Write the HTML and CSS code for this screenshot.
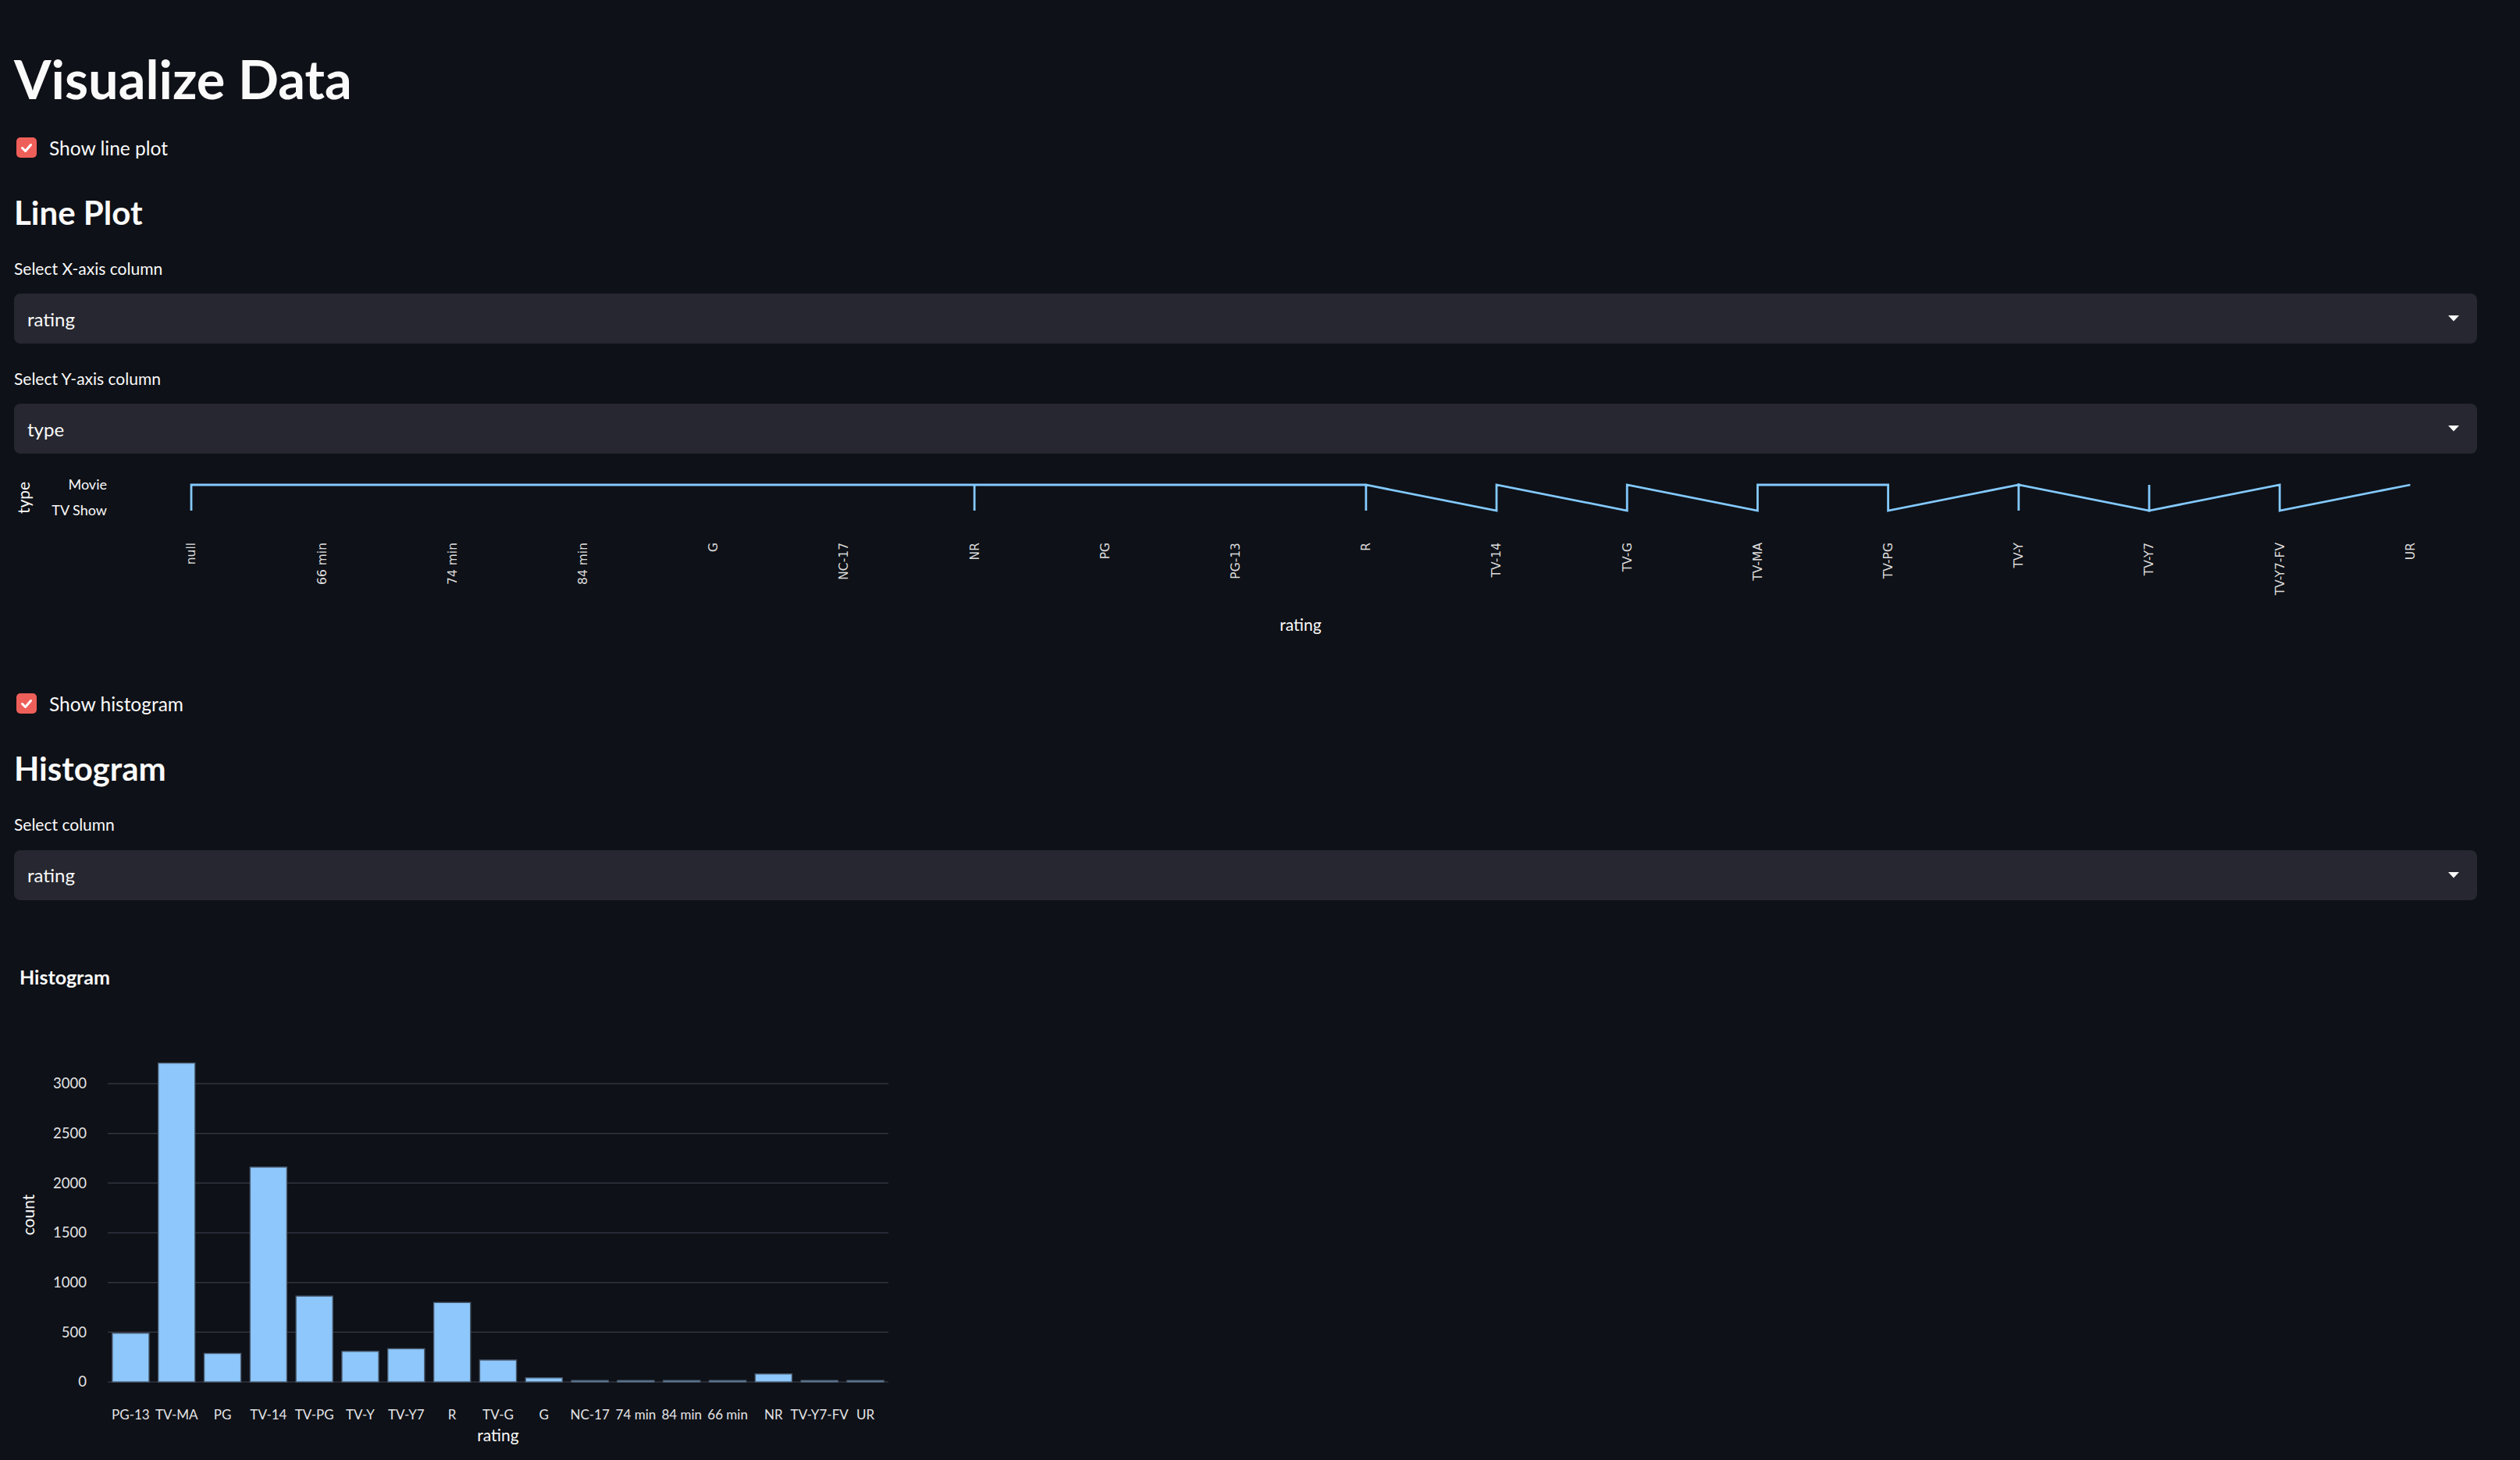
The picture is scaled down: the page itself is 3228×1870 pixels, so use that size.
FILE: index.html
```html
<!DOCTYPE html>
<html lang="en">
<head>
<meta charset="utf-8">
<title>Visualize Data</title>
<link rel="stylesheet" href="styles.css">
</head>
<body>
<main class="app">
  <h1 class="title">Visualize Data</h1>

  <label class="checkbox">
    <span class="box"><svg width="26" height="26" viewBox="0 0 26 26"><polyline points="7.5,13.5 11.5,17.5 18.5,9.5" fill="none" stroke="#ffffff" stroke-width="3" stroke-linecap="round" stroke-linejoin="round"/></svg></span>
    <span class="check-label">Show line plot</span>
  </label>

  <h3 class="subheader">Line Plot</h3>

  <div class="field">
    <div class="field-label">Select X-axis column</div>
    <div class="select"><span class="value">rating</span><svg class="arrow" width="14" height="8" viewBox="0 0 14 8"><polygon points="0,0 14,0 7,7.5" fill="#fafafa"/></svg></div>
  </div>

  <div class="field">
    <div class="field-label">Select Y-axis column</div>
    <div class="select"><span class="value">type</span><svg class="arrow" width="14" height="8" viewBox="0 0 14 8"><polygon points="0,0 14,0 7,7.5" fill="#fafafa"/></svg></div>
  </div>

  <div class="chart line-chart">
    <svg width="3155" height="230" viewBox="0 0 3155 230">
      <text class="axis-title" x="13" y="38.5" transform="rotate(-90 13 38.5)" text-anchor="middle" dy="0.35em">type</text>
      <text class="ylab" x="119" y="22" text-anchor="end" dy="0.35em">Movie</text>
      <text class="ylab" x="119" y="55" text-anchor="end" dy="0.35em">TV Show</text>
      <path d="M227,55 L227,22 L1230.2,22 L1230.2,55 L1230.2,22 L1731.8,22 L1731.8,55 L1731.8,22 L1899,55 L1899,22 L2066.2,55 L2066.2,22 L2233.4,55 L2233.4,22 L2400.6,22 L2400.6,55 L2567.8,22 L2567.8,55 L2567.8,22 L2735,55 L2735,22 L2735,55 L2902.2,22 L2902.2,55 L3069.4,22" fill="none" stroke="#83c9ff" stroke-width="2.8"/>
      <g class="xlab" text-anchor="end">
        <text x="227" y="96" transform="rotate(-90 227 96)" dy="0.35em">null</text>
        <text x="394.2" y="96" transform="rotate(-90 394.2 96)" dy="0.35em">66 min</text>
        <text x="561.4" y="96" transform="rotate(-90 561.4 96)" dy="0.35em">74 min</text>
        <text x="728.6" y="96" transform="rotate(-90 728.6 96)" dy="0.35em">84 min</text>
        <text x="895.8" y="96" transform="rotate(-90 895.8 96)" dy="0.35em">G</text>
        <text x="1063" y="96" transform="rotate(-90 1063 96)" dy="0.35em">NC-17</text>
        <text x="1230.2" y="96" transform="rotate(-90 1230.2 96)" dy="0.35em">NR</text>
        <text x="1397.4" y="96" transform="rotate(-90 1397.4 96)" dy="0.35em">PG</text>
        <text x="1564.6" y="96" transform="rotate(-90 1564.6 96)" dy="0.35em">PG-13</text>
        <text x="1731.8" y="96" transform="rotate(-90 1731.8 96)" dy="0.35em">R</text>
        <text x="1899" y="96" transform="rotate(-90 1899 96)" dy="0.35em">TV-14</text>
        <text x="2066.2" y="96" transform="rotate(-90 2066.2 96)" dy="0.35em">TV-G</text>
        <text x="2233.4" y="96" transform="rotate(-90 2233.4 96)" dy="0.35em">TV-MA</text>
        <text x="2400.6" y="96" transform="rotate(-90 2400.6 96)" dy="0.35em">TV-PG</text>
        <text x="2567.8" y="96" transform="rotate(-90 2567.8 96)" dy="0.35em">TV-Y</text>
        <text x="2735" y="96" transform="rotate(-90 2735 96)" dy="0.35em">TV-Y7</text>
        <text x="2902.2" y="96" transform="rotate(-90 2902.2 96)" dy="0.35em">TV-Y7-FV</text>
        <text x="3069.4" y="96" transform="rotate(-90 3069.4 96)" dy="0.35em">UR</text>
      </g>
      <text class="axis-title" x="1648" y="202" text-anchor="middle" dy="0.35em">rating</text>
    </svg>
  </div>

  <label class="checkbox">
    <span class="box"><svg width="26" height="26" viewBox="0 0 26 26"><polyline points="7.5,13.5 11.5,17.5 18.5,9.5" fill="none" stroke="#ffffff" stroke-width="3" stroke-linecap="round" stroke-linejoin="round"/></svg></span>
    <span class="check-label">Show histogram</span>
  </label>

  <h3 class="subheader">Histogram</h3>

  <div class="field">
    <div class="field-label">Select column</div>
    <div class="select"><span class="value">rating</span><svg class="arrow" width="14" height="8" viewBox="0 0 14 8"><polygon points="0,0 14,0 7,7.5" fill="#fafafa"/></svg></div>
  </div>

  <div class="chart hist-chart">
    <svg width="1160" height="700" viewBox="0 0 1160 700">
      <text class="hist-title" x="7" y="80" dy="0.35em">Histogram</text>
      <g class="grid">
        <line x1="120" x2="1120" y1="216" y2="216"/>
        <line x1="120" x2="1120" y1="279.7" y2="279.7"/>
        <line x1="120" x2="1120" y1="343.3" y2="343.3"/>
        <line x1="120" x2="1120" y1="407" y2="407"/>
        <line x1="120" x2="1120" y1="470.7" y2="470.7"/>
        <line x1="120" x2="1120" y1="534.3" y2="534.3"/>
        <line x1="120" x2="1120" y1="598" y2="598"/>
      </g>
      <g class="ytick" text-anchor="end">
        <text x="93" y="216" dy="0.35em">3000</text>
        <text x="93" y="279.7" dy="0.35em">2500</text>
        <text x="93" y="343.3" dy="0.35em">2000</text>
        <text x="93" y="407" dy="0.35em">1500</text>
        <text x="93" y="470.7" dy="0.35em">1000</text>
        <text x="93" y="534.3" dy="0.35em">500</text>
        <text x="93" y="598" dy="0.35em">0</text>
      </g>
      <text class="axis-title" x="19" y="384" transform="rotate(-90 19 384)" text-anchor="middle" dy="0.35em">count</text>
      <g class="bars">
        <rect x="125.88" y="535.6" width="47.06" height="62.4"/>
        <rect x="184.70" y="189.6" width="47.06" height="408.4"/>
        <rect x="243.52" y="561.5" width="47.06" height="36.5"/>
        <rect x="302.34" y="322.9" width="47.06" height="275.1"/>
        <rect x="361.16" y="488.1" width="47.06" height="109.9"/>
        <rect x="419.98" y="558.9" width="47.06" height="39.1"/>
        <rect x="478.80" y="555.5" width="47.06" height="42.5"/>
        <rect x="537.62" y="496.3" width="47.06" height="101.7"/>
        <rect x="596.44" y="570.0" width="47.06" height="28.0"/>
        <rect x="655.26" y="592.8" width="47.06" height="5.2"/>
        <rect x="714.08" y="596.2" width="47.06" height="1.8"/>
        <rect x="772.90" y="596.2" width="47.06" height="1.8"/>
        <rect x="831.72" y="596.2" width="47.06" height="1.8"/>
        <rect x="890.54" y="596.2" width="47.06" height="1.8"/>
        <rect x="949.36" y="587.8" width="47.06" height="10.2"/>
        <rect x="1008.18" y="596.2" width="47.06" height="1.8"/>
        <rect x="1067.00" y="596.2" width="47.06" height="1.8"/>
      </g>
      <g class="xtick" text-anchor="middle">
        <text x="149.4" y="640" dy="0.35em">PG-13</text>
        <text x="208.2" y="640" dy="0.35em">TV-MA</text>
        <text x="267.1" y="640" dy="0.35em">PG</text>
        <text x="325.9" y="640" dy="0.35em">TV-14</text>
        <text x="384.7" y="640" dy="0.35em">TV-PG</text>
        <text x="443.5" y="640" dy="0.35em">TV-Y</text>
        <text x="502.3" y="640" dy="0.35em">TV-Y7</text>
        <text x="561.2" y="640" dy="0.35em">R</text>
        <text x="620.0" y="640" dy="0.35em">TV-G</text>
        <text x="678.8" y="640" dy="0.35em">G</text>
        <text x="737.6" y="640" dy="0.35em">NC-17</text>
        <text x="796.4" y="640" dy="0.35em">74 min</text>
        <text x="855.3" y="640" dy="0.35em">84 min</text>
        <text x="914.1" y="640" dy="0.35em">66 min</text>
        <text x="972.9" y="640" dy="0.35em">NR</text>
        <text x="1031.7" y="640" dy="0.35em">TV-Y7-FV</text>
        <text x="1090.5" y="640" dy="0.35em">UR</text>
      </g>
      <text class="axis-title" x="620" y="667" text-anchor="middle" dy="0.35em">rating</text>
    </svg>
  </div>
</main>
</body>
</html>
```

FILE: styles.css
```css
html, body {
  margin: 0;
  padding: 0;
  background: #0e1117;
}

body {
  color: #fafafa;
  font-family: Lato, "Noto Sans", "Liberation Sans", sans-serif;
}

.app {
  padding: 59px 55px 0 18px;
  display: flex;
  flex-direction: column;
}

.title {
  margin: 0;
  font-size: 68.5px;
  line-height: 84px;
  font-weight: 700;
  color: #fafafa;
}

.checkbox {
  display: flex;
  align-items: center;
  gap: 16px;
  height: 26px;
  padding-left: 3px;
  font-size: 24.5px;
  color: #fafafa;
}

.title + .checkbox {
  margin-top: 33px;
}

.chart + .checkbox {
  margin-top: 59px;
}

.box {
  width: 26px;
  height: 26px;
  border-radius: 5px;
  background: #ef5f5a;
  display: flex;
  align-items: center;
  justify-content: center;
  flex: none;
}

.box svg {
  display: block;
}

.subheader {
  margin: 45px 0 0;
  font-size: 42px;
  line-height: 50px;
  font-weight: 700;
  color: #fafafa;
}

.field {
  display: flex;
  flex-direction: column;
}

.subheader + .field {
  margin-top: 34px;
}

.field + .field {
  margin-top: 31.6px;
}

.field-label {
  font-size: 21px;
  line-height: 25px;
  color: #fafafa;
}

.select {
  margin-top: 20.4px;
  height: 64px;
  background: #262730;
  border-radius: 8px;
  display: flex;
  align-items: center;
  justify-content: space-between;
  padding: 0 23px 0 17px;
}

.select .value {
  font-size: 24px;
  color: #fafafa;
}

.select .arrow {
  display: block;
}

.line-chart {
  margin-top: 18px;
}

.hist-chart {
  margin-top: 19px;
}

.chart svg {
  display: block;
}

.chart text {
  font-family: Lato, "Noto Sans", sans-serif;
  fill: #fafafa;
}

.axis-title {
  font-size: 21px;
}

.ylab {
  font-size: 18px;
}

.line-chart .xlab text {
  font-family: "DejaVu Sans", sans-serif;
  font-size: 15.5px;
  fill: #dedede;
}

.hist-title {
  font-size: 25px;
  font-weight: 700;
}

.grid line {
  stroke: #31333f;
  stroke-width: 1.6;
}

.ytick text {
  font-size: 18.5px;
  fill: #e4e4e6;
}

.xtick text {
  font-size: 17px;
  fill: #e4e4e6;
}

.bars rect {
  fill: #8dc7fb;
  stroke: #4b5c70;
  stroke-width: 1.4;
}
```
